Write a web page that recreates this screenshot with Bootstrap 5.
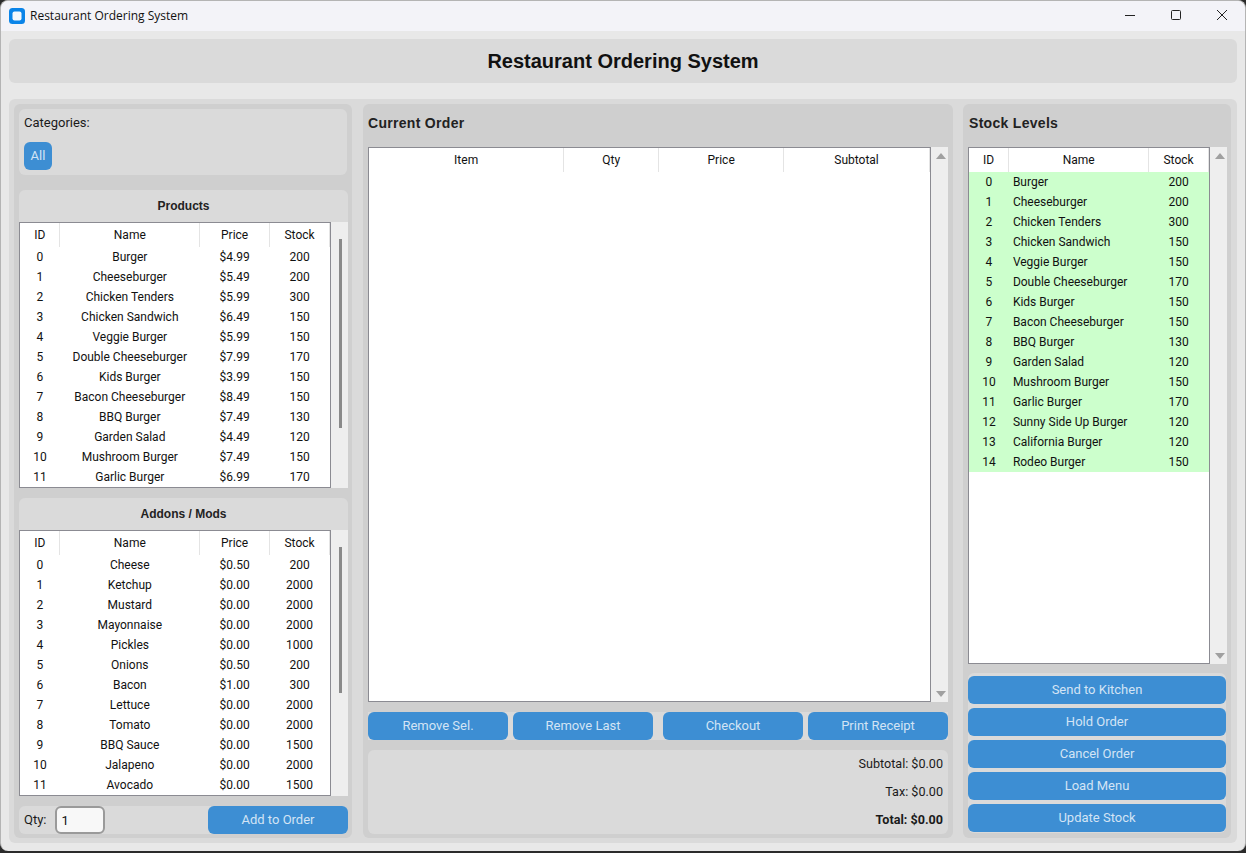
<!DOCTYPE html>
<html lang="en">

<head>
    <meta charset="UTF-8">
    <meta name="viewport" content="width=device-width, initial-scale=1.0">
    <title>Restaurant Ordering System</title>
    <!-- Bootstrap CSS -->
    <link href="https://cdn.jsdelivr.net/npm/bootstrap@5.3.0/dist/css/bootstrap.min.css" rel="stylesheet">
    <style>
        html, body { height: 100%; }
        body { background: #2b2b2b; overflow: hidden; font-family: Roboto, sans-serif; font-size: 13px; color: #1a1a1a; }
        .app-window { width: 1246px; height: 851px; background: #e8e8e8; border-radius: 8px; overflow: hidden; border: 1px solid #b4b4b4; border-bottom: 0; }
        .title-strip { height: 30px; background: #f3f3f8; padding-left: 8px; font-family: "Open Sans", sans-serif; font-size: 12px; color: #111; }
        .win-logo { width: 16px; height: 16px; margin-right: 5px; }
        .win-btn { width: 46px; height: 28px; }
        .win-ctrls { align-self: flex-start; }
        .app-body { padding: 8px 8px 0; }
        .app-header { height: 44px; background: #dadada; border-radius: 6px; margin-bottom: 16px; font-family: "Liberation Sans", sans-serif; font-size: 20px; font-weight: 700; color: #111; }
        .outer-box { height: 744px; background: #dadada; border-radius: 6px; padding: 5px 6px 5px 5px; gap: 10px; }
        .side-left { width: 338px; margin-right: 1px; }
        .side-mid { width: 590px; }
        .side-right { width: 268px; }
        .pane { background: #cfcfcf; border-radius: 6px; padding: 5px; }
        .soft-box { background: #dadada; border-radius: 6px; }
        .cat-box { width: 328px; height: 66px; padding: 5px; margin-bottom: 15px; }
        .cat-label { line-height: 18px; margin-bottom: 10px; }
        .blue-btn, .blue-btn:hover { background: #3d8ed3; color: #d3e4f5; border: 0; border-radius: 6px; font-family: Roboto, sans-serif; font-size: 13px; padding: 0; height: 28px; line-height: 28px; }
        .all-btn { width: 28px; }
        .list-title { height: 32px; font-family: "Liberation Sans", sans-serif; font-size: 12px; font-weight: 700; color: #222; }
        .list-box { width: 329px; height: 298px; margin-bottom: 10px; }
        .tbl-wrap { background: #fff; border: 1px solid #8b8b92; overflow: hidden; }
        .tbl-wrap .table { margin: 0; table-layout: fixed; width: auto; font-family: Roboto, sans-serif; font-size: 12px; --bs-table-bg: transparent; color: #111; }
        .tbl-wrap .table th, .tbl-wrap .table td { border: 0; padding: 0; text-align: center; vertical-align: middle; font-weight: 400; color: #111; box-shadow: none; }
        .tbl-wrap .table th { height: 24px; border-right: 1px solid #e4e4e4; }
        .tbl-wrap .table td { height: 20px; }
        .tbl-wrap .table td.name-left { text-align: left; padding-left: 4px; }
        .tbl-wrap .table tr.stock-ok td { background: #ccffcc; }
        .scroll-track { width: 17px; background: #eeeeee; flex-shrink: 0; }
        .thin-thumb { width: 3px; background: #8a8a8a; margin: 17px 0 0 8px; }
        .thumb-prod { height: 189px; }
        .thumb-addon { height: 146px; }
        .arrow-up, .arrow-dn { width: 0; height: 0; border-left: 5px solid transparent; border-right: 5px solid transparent; margin-left: 5px; }
        .arrow-up { border-bottom: 6px solid #a0a0a0; margin-top: 6px; }
        .arrow-dn { border-top: 6px solid #a0a0a0; margin-bottom: 5px; }
        .qty-bar { width: 329px; height: 28px; padding-left: 5px; }
        .qty-input { width: 50px; height: 28px; flex-shrink: 0; background: #f8f8f8; border: 2px solid #9a9a9a; border-radius: 6px; padding: 0 5px; margin-left: 8px; font-size: 13px; color: #111; box-shadow: none; }
        .qty-input:focus { background: #f8f8f8; border-color: #9a9a9a; box-shadow: none; }
        .add-btn { width: 140px; }
        .pane-title { height: 38px; font-family: "Liberation Sans", sans-serif; font-size: 14px; font-weight: 700; color: #222; line-height: 28px; letter-spacing: .3px; }
        .stock-title { padding-left: 1px; }
        .order-list { height: 555px; }
        .order-bar { height: 28px; margin: 10px 0; width: 580px; background: #dadada; }
        .order-bar .blue-btn { width: 140px; }
        .btn-pair { gap: 5px; }
        .sum-box { height: 84px; width: 580px; padding: 0 5px; font-size: 12.6px; }
        .sum-line { height: 28px; line-height: 28px; text-align: right; }
        .stock-list { width: 259px; height: 517px; }
        .action-box { width: 258px; height: 160px; margin-top: 9px; padding-top: 3px; gap: 4px; }
        .action-box .blue-btn { width: 100%; }
    </style>
</head>

<body>
    <div class="app-window">
        <!-- Title bar -->
        <div class="title-strip d-flex align-items-center">
            <svg class="win-logo" viewBox="0 0 16 16">
                <rect width="16" height="16" rx="3.5" fill="#0a84e8"/>
                <rect x="3.5" y="3.5" width="9" height="9" rx="2" fill="#f4f8fc"/>
            </svg>
            <span>Restaurant Ordering System</span>
            <div class="ms-auto d-flex win-ctrls">
                <div class="win-btn d-flex align-items-center justify-content-center">
                    <svg width="12" height="12" viewBox="0 0 12 12"><path d="M1 6.5h10" stroke="#222" fill="none"/></svg>
                </div>
                <div class="win-btn d-flex align-items-center justify-content-center">
                    <svg width="12" height="12" viewBox="0 0 12 12"><rect x="1.5" y="1.5" width="9" height="9" rx="1" stroke="#222" fill="none"/></svg>
                </div>
                <div class="win-btn d-flex align-items-center justify-content-center">
                    <svg width="12" height="12" viewBox="0 0 12 12"><path d="M1 1l10 10M11 1L1 11" stroke="#222" fill="none"/></svg>
                </div>
            </div>
        </div>

        <div class="app-body">
            <div class="app-header d-flex align-items-center justify-content-center">Restaurant Ordering System</div>

            <div class="outer-box d-flex">
                <!-- Left column -->
                <div class="pane side-left">
                    <div class="soft-box cat-box">
                        <div class="cat-label">Categories:</div>
                        <button class="btn blue-btn all-btn">All</button>
                    </div>

                    <div class="soft-box list-box d-flex flex-column">
                        <div class="list-title d-flex align-items-center justify-content-center">Products</div>
                        <div class="d-flex flex-grow-1">
                            <div class="tbl-wrap flex-grow-1">
                                <table class="table">
                                    <colgroup><col width="40"><col width="140"><col width="70"><col width="60"></colgroup>
                                    <thead><tr><th>ID</th><th>Name</th><th>Price</th><th>Stock</th></tr></thead>
                                    <tbody id="productsBody"></tbody>
                                </table>
                            </div>
                            <div class="scroll-track"><div class="thin-thumb thumb-prod"></div></div>
                        </div>
                    </div>

                    <div class="soft-box list-box d-flex flex-column">
                        <div class="list-title d-flex align-items-center justify-content-center">Addons / Mods</div>
                        <div class="d-flex flex-grow-1">
                            <div class="tbl-wrap flex-grow-1">
                                <table class="table">
                                    <colgroup><col width="40"><col width="140"><col width="70"><col width="60"></colgroup>
                                    <thead><tr><th>ID</th><th>Name</th><th>Price</th><th>Stock</th></tr></thead>
                                    <tbody id="addonsBody"></tbody>
                                </table>
                            </div>
                            <div class="scroll-track"><div class="thin-thumb thumb-addon"></div></div>
                        </div>
                    </div>

                    <div class="soft-box qty-bar d-flex align-items-center">
                        <span>Qty:</span>
                        <input type="text" class="form-control qty-input" value="1">
                        <button class="btn blue-btn add-btn ms-auto">Add to Order</button>
                    </div>
                </div>

                <!-- Current order -->
                <div class="pane side-mid">
                    <div class="pane-title">Current Order</div>
                    <div class="d-flex order-list">
                        <div class="tbl-wrap flex-grow-1">
                            <table class="table">
                                <colgroup><col width="195"><col width="95"><col width="125"><col width="146"></colgroup>
                                <thead><tr><th>Item</th><th>Qty</th><th>Price</th><th>Subtotal</th></tr></thead>
                            </table>
                        </div>
                        <div class="scroll-track d-flex flex-column justify-content-between">
                            <div class="arrow-up"></div>
                            <div class="arrow-dn"></div>
                        </div>
                    </div>
                    <div class="order-bar d-flex justify-content-between">
                        <div class="d-flex btn-pair">
                            <button class="btn blue-btn">Remove Sel.</button>
                            <button class="btn blue-btn">Remove Last</button>
                        </div>
                        <div class="d-flex btn-pair">
                            <button class="btn blue-btn">Checkout</button>
                            <button class="btn blue-btn">Print Receipt</button>
                        </div>
                    </div>
                    <div class="soft-box sum-box">
                        <div class="sum-line">Subtotal: $0.00</div>
                        <div class="sum-line">Tax: $0.00</div>
                        <div class="sum-line fw-bold">Total: $0.00</div>
                    </div>
                </div>

                <!-- Stock levels -->
                <div class="pane side-right">
                    <div class="pane-title stock-title">Stock Levels</div>
                    <div class="d-flex stock-list">
                        <div class="tbl-wrap flex-grow-1">
                            <table class="table">
                                <colgroup><col width="40"><col width="140"><col width="60"></colgroup>
                                <thead><tr><th>ID</th><th>Name</th><th>Stock</th></tr></thead>
                                <tbody id="stockBody"></tbody>
                            </table>
                        </div>
                        <div class="scroll-track d-flex flex-column justify-content-between">
                            <div class="arrow-up"></div>
                            <div class="arrow-dn"></div>
                        </div>
                    </div>
                    <div class="soft-box action-box d-flex flex-column">
                        <button class="btn blue-btn">Send to Kitchen</button>
                        <button class="btn blue-btn">Hold Order</button>
                        <button class="btn blue-btn">Cancel Order</button>
                        <button class="btn blue-btn">Load Menu</button>
                        <button class="btn blue-btn">Update Stock</button>
                    </div>
                </div>
            </div>
        </div>
    </div>

    <!-- Bootstrap JS -->
    <script src="https://cdn.jsdelivr.net/npm/bootstrap@5.3.0/dist/js/bootstrap.bundle.min.js"></script>
    <script>
        const products = [
            ['Burger', '$4.99', 200], ['Cheeseburger', '$5.49', 200], ['Chicken Tenders', '$5.99', 300],
            ['Chicken Sandwich', '$6.49', 150], ['Veggie Burger', '$5.99', 150], ['Double Cheeseburger', '$7.99', 170],
            ['Kids Burger', '$3.99', 150], ['Bacon Cheeseburger', '$8.49', 150], ['BBQ Burger', '$7.49', 130],
            ['Garden Salad', '$4.49', 120], ['Mushroom Burger', '$7.49', 150], ['Garlic Burger', '$6.99', 170]
        ];
        const addons = [
            ['Cheese', '$0.50', 200], ['Ketchup', '$0.00', 2000], ['Mustard', '$0.00', 2000],
            ['Mayonnaise', '$0.00', 2000], ['Pickles', '$0.00', 1000], ['Onions', '$0.50', 200],
            ['Bacon', '$1.00', 300], ['Lettuce', '$0.00', 2000], ['Tomato', '$0.00', 2000],
            ['BBQ Sauce', '$0.00', 1500], ['Jalapeno', '$0.00', 2000], ['Avocado', '$0.00', 1500]
        ];
        const stock = products.map(p => [p[0], p[2]]).concat([
            ['Sunny Side Up Burger', 120], ['California Burger', 120], ['Rodeo Burger', 150]
        ]);

        // Fill the three lists
        function fillMenu(id, rows) {
            document.getElementById(id).innerHTML = rows.map((r, i) =>
                `<tr><td>${i}</td><td>${r[0]}</td><td>${r[1]}</td><td>${r[2]}</td></tr>`).join('');
        }
        fillMenu('productsBody', products);
        fillMenu('addonsBody', addons);
        document.getElementById('stockBody').innerHTML = stock.map((r, i) =>
            `<tr class="stock-ok"><td>${i}</td><td class="name-left">${r[0]}</td><td>${r[1]}</td></tr>`).join('');
    </script>
</body>

</html>
